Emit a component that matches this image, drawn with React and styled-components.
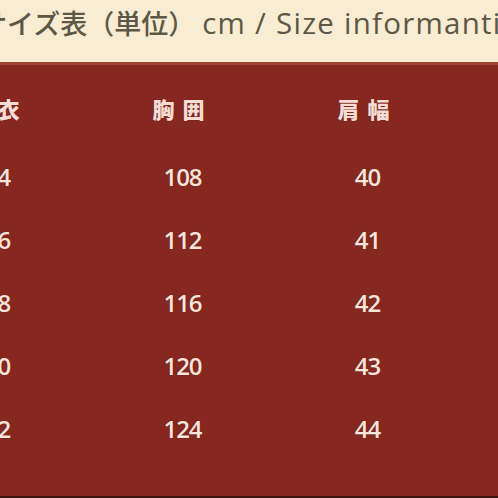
import React from "react";
import styled, { createGlobalStyle } from "styled-components";

const Global = createGlobalStyle`
  html, body { margin: 0; padding: 0; background: #862820; }
  body { width: 498px; height: 498px; overflow: hidden; }
  #root { width: 498px; height: 498px; overflow: hidden; }
`;

const Page = styled.div`
  width: 498px;
  height: 498px;
  overflow: hidden;
  display: flex;
  flex-direction: column;
  background: #862820;
`;

const TitleBar = styled.div`
  flex: none;
  height: 65px;
  box-sizing: border-box;
  background: #f8ecd3;
  border-bottom: 3px solid #9c4632;
  overflow: hidden;
  white-space: nowrap;
`;

const Title = styled.div`
  margin-left: -20px;
  padding-top: 3px;
  font-family: "Open Sans", "Noto Sans CJK JP", sans-serif;
  font-size: 29.5px;
  font-weight: 500;
  line-height: 40px;
  color: #5d5745;
  letter-spacing: 1.25px;
`;

const Jp = styled.span`
  font-family: "Noto Sans CJK JP", sans-serif;
  font-size: 27px;
  font-weight: 500;
  letter-spacing: 0;
  margin-right: 7px;
`;

const Table = styled.div`
  flex: 1;
  display: flex;
  flex-direction: column;
  padding-top: 11px;
  margin-left: -95px;
  border-bottom: 2px solid #3d1410;
`;

const Row = styled.div`
  display: grid;
  grid-template-columns: repeat(4, 185px);
  height: 63px;
  flex: none;
  margin-bottom: ${(p) => (p.$head ? "6px" : "0")};
`;

const Cell = styled.div`
  display: flex;
  align-items: center;
  justify-content: center;
  color: ${(p) => (p.$head ? "#f6dcd3" : "#f7e4dc")};
  font-family: ${(p) =>
    p.$head ? '"Noto Sans CJK JP", sans-serif' : '"Open Sans", sans-serif'};
  font-weight: ${(p) => (p.$head ? 900 : 600)};
  font-size: ${(p) => (p.$head ? "22px" : "24px")};
  letter-spacing: ${(p) => (p.$head ? "8px" : "-1px")};
  text-shadow: 0 0 1px rgba(60, 10, 5, 0.6);
`;

const headers = ["上衣", "胸囲", "肩幅", "着丈"];
const rows = [
  ["64", "108", "40", "66"],
  ["66", "112", "41", "68"],
  ["68", "116", "42", "70"],
  ["70", "120", "43", "72"],
  ["72", "124", "44", "74"],
];

export default function App() {
  return (
    <>
      <Global />
      <Page>
        <TitleBar>
          <Title>
            <Jp>サイズ表（単位）</Jp>cm / Size informantion
          </Title>
        </TitleBar>
        <Table>
          <Row $head>
            {headers.map((h) => (
              <Cell $head key={h}>
                {h}
              </Cell>
            ))}
          </Row>
          {rows.map((r, i) => (
            <Row key={i}>
              {r.map((v, j) => (
                <Cell key={j}>{v}</Cell>
              ))}
            </Row>
          ))}
        </Table>
      </Page>
    </>
  );
}
